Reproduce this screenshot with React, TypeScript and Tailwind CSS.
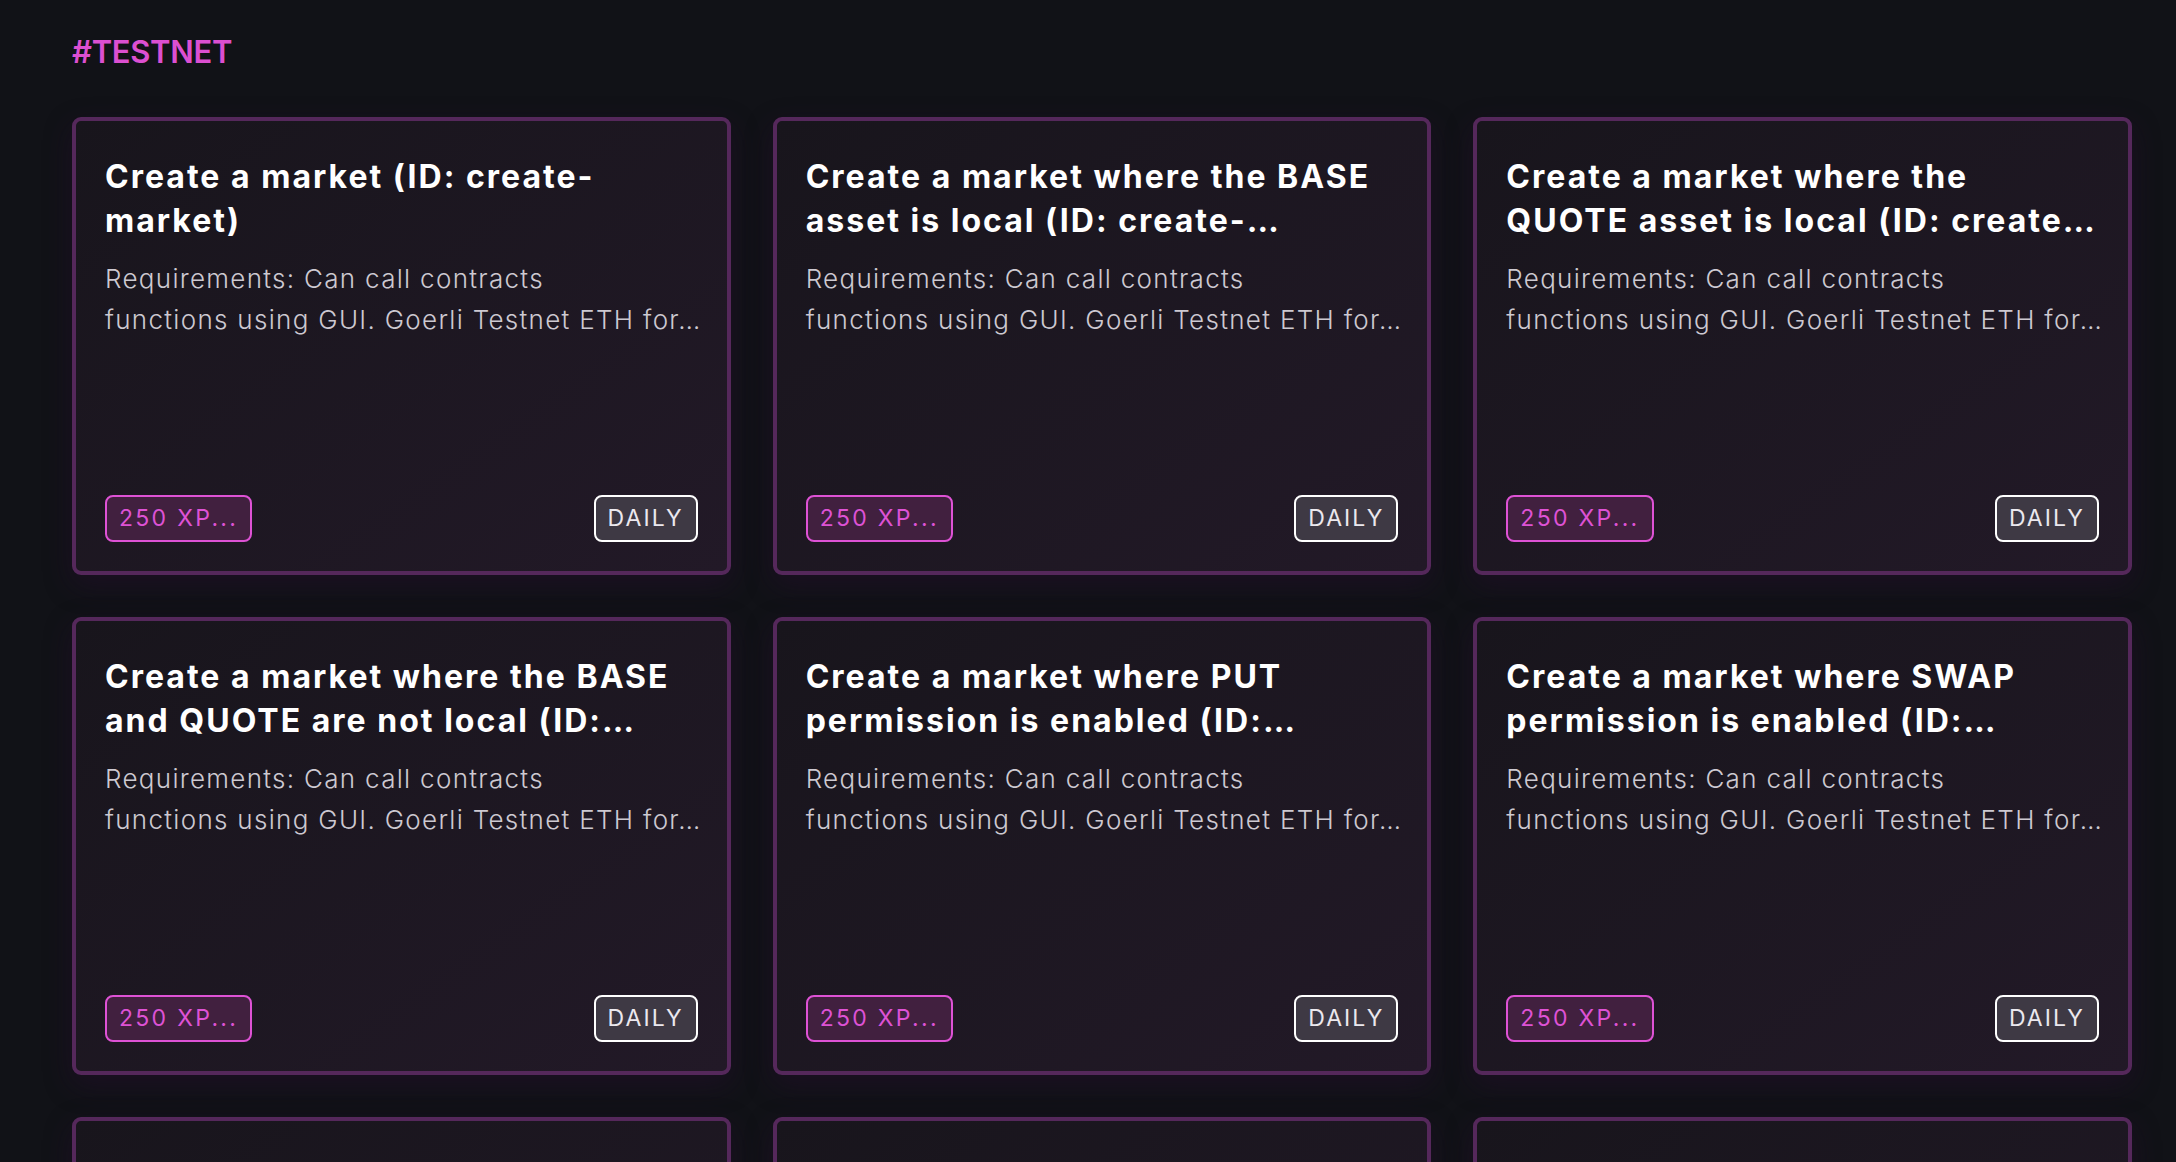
const quests = [
  {
    title: ["Create a market (ID: create-", "market)"],
  },
  {
    title: ["Create a market where the BASE", "asset is local (ID: create-…"],
  },
  {
    title: ["Create a market where the", "QUOTE asset is local (ID: create…"],
  },
  {
    title: ["Create a market where the BASE", "and QUOTE are not local (ID:…"],
  },
  {
    title: ["Create a market where PUT", "permission is enabled (ID:…"],
  },
  {
    title: ["Create a market where SWAP", "permission is enabled (ID:…"],
  },
  {
    title: ["Place a limit order on a", "market (ID: place-limit-order)"],
  },
  {
    title: ["Place a market order on a", "market (ID: place-market-order)"],
  },
  {
    title: ["Cancel an open order on a", "market (ID: cancel-order)"],
  },
];

function QuestCard({ title }: { title: string[] }) {
  return (
    <div className="h-[458px] flex flex-col rounded-[9px] border-4 border-[#55285b] bg-linear-to-br from-[#18151c] to-[#221927] p-[29px] shadow-[0_10px_28px_rgba(40,14,48,0.45)]">
      <h3 className="mt-[5px] text-[32px] leading-[44px] font-bold text-white tracking-[0.063em]">
        {title.map((line, i) => (
          <span key={i} className="block whitespace-nowrap">
            {line}
          </span>
        ))}
      </h3>
      <p className="mt-[15px] text-[26px] leading-[41px] font-light text-[#cdc9d1] tracking-[0.05em]">
        <span className="block whitespace-nowrap">
          Requirements: Can call contracts
        </span>
        <span className="block whitespace-nowrap">
          functions using GUI. Goerli Testnet ETH for…
        </span>
      </p>
      <div className="mt-auto flex items-center justify-between">
        <span className="h-[47px] flex items-center px-[12px] rounded-[8px] border-2 border-[#de52d5] bg-[#41203f] text-[#de52d5] text-[23px] tracking-[0.1em]">
          250 XP...
        </span>
        <span className="h-[47px] flex items-center px-[12px] rounded-[8px] border-2 border-white bg-[#3e3944] text-[#ebe8ee] text-[23px] tracking-[0.09em]">
          DAILY
        </span>
      </div>
    </div>
  );
}

export default function App() {
  return (
    <div className="min-h-screen bg-[#111217] pl-[72px] pr-[44px] pt-[32px] pb-[60px] font-['Inter','Noto_Sans',sans-serif]">
      <h2 className="text-[31px] leading-[40px] font-semibold text-[#dc4fd1] tracking-[-0.01em]">
        #TESTNET
      </h2>
      <div className="mt-[45px] grid grid-cols-3 gap-[42px]">
        {quests.map((q, i) => (
          <QuestCard key={i} title={q.title} />
        ))}
      </div>
    </div>
  );
}
